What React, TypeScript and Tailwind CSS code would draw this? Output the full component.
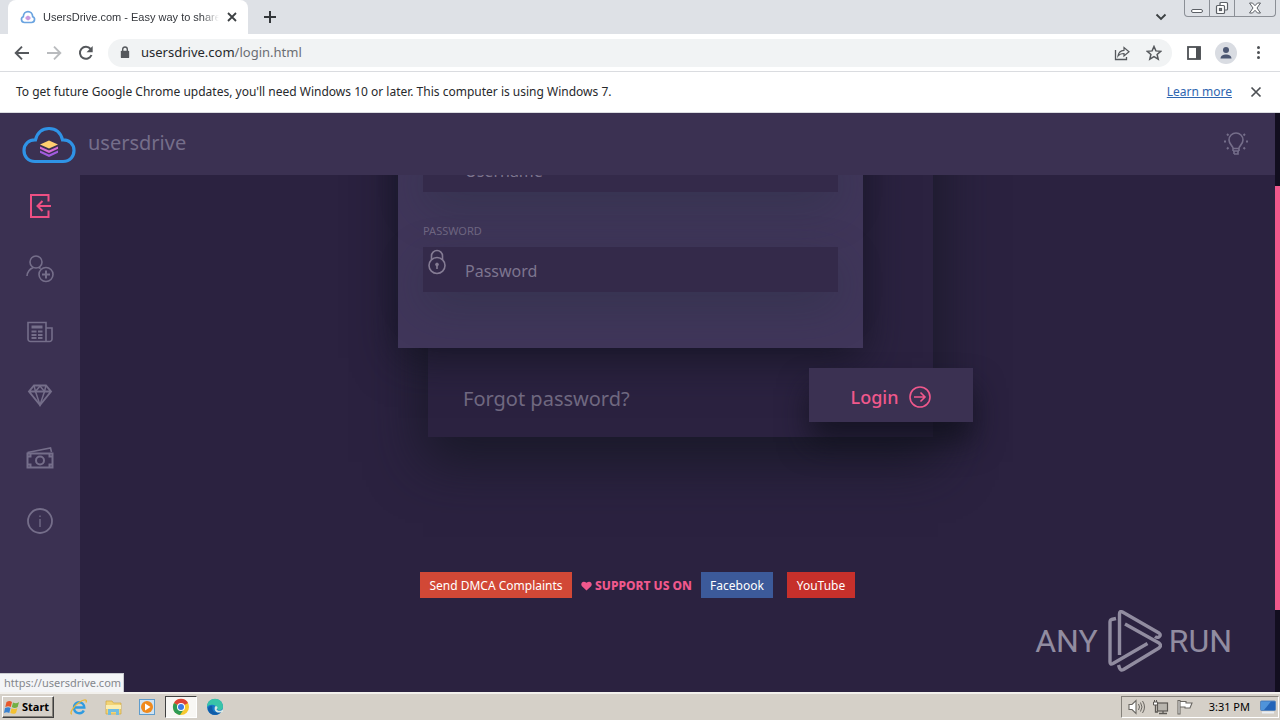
import type { ReactNode } from 'react';

type IconProps = { children: ReactNode; className?: string; box?: string };

function Icon({ children, className = '', box = '0 0 24 24' }: IconProps) {
  return (
    <svg
      viewBox={box}
      fill="none"
      stroke="currentColor"
      strokeWidth="1.600"
      aria-hidden="true"
      className={`shrink-0 ${className}`}
    >
      {children}
    </svg>
  );
}

function TabStrip() {
  return (
    <div className="flex h-[34px] items-start bg-[#dee1e6] pl-2">
      <div className="flex h-[34px] w-60 items-center rounded-t-lg bg-white pr-2 pl-3">
        <Icon box="0 0 16 16" className="size-4 text-[#6ba4e0]">
          <path d="M4.500 13.500C.8 13.500.6 8.600 3.300 7.800 3.500 1 12.500 1 12.700 7.800c2.700.8 2.500 5.700-1.200 5.700z" strokeWidth="1.700" />
          <path d="M8 6.500l2.500 1.500v2L8 11.500 5.500 10V8z" fill="#c99ae0" stroke="none" />
        </Icon>
        <span className="ml-[7px] w-[176px] mask-r-from-90% font-['Liberation_Sans',sans-serif] text-[11px] whitespace-nowrap text-[#34373c]">
          UsersDrive.com - Easy way to share
        </span>
        <button type="button" aria-label="Close tab" className="ml-[5px] flex size-4 items-center justify-center text-[#3c4043]">
          <Icon box="0 0 10 10" className="size-[10px]">
            <path d="M1 1l8 8M9 1L1 9" strokeWidth="1.800" />
          </Icon>
        </button>
      </div>
      <button type="button" aria-label="New tab" className="mt-[10px] ml-[15px] text-[#33363a]">
        <Icon box="0 0 14 14" className="size-[14px]">
          <path d="M7 1v12M1 7h12" strokeWidth="2" />
        </Icon>
      </button>
      <div className="ml-auto flex">
        <button type="button" aria-label="Search tabs" className="mt-3 mr-[17px] self-start text-[#3c4043]">
          <Icon box="0 0 12 10" className="h-[10px] w-3">
            <path d="M1.500 2.500L6 7l4.500-4.500" strokeWidth="1.900" />
          </Icon>
        </button>
        <div className="mr-1 flex h-[17px] rounded-b-[4px] border border-t-0 border-[#8b8f96] text-[#5c6066]">
          <button type="button" aria-label="Minimize" className="flex w-[25px] items-end justify-center border-r border-[#8b8f96] pb-[3px]">
            <span className="h-[4px] w-3 rounded-[2px] border border-[#5c6066] bg-white" />
          </button>
          <button type="button" aria-label="Restore" className="flex w-[25px] items-center justify-center border-r border-[#8b8f96]">
            <Icon box="0 0 14 14" className="size-[14px]">
              <rect x="5" y="1.500" width="7.500" height="7.500" rx="1" fill="#fff" strokeWidth="1.200" />
              <rect x="1.500" y="4.500" width="8" height="8" rx="1" fill="#fff" strokeWidth="1.200" />
              <rect x="4.500" y="7.500" width="2" height="2" strokeWidth="1.200" />
            </Icon>
          </button>
          <button type="button" aria-label="Close" className="flex w-10 items-center justify-center">
            <Icon box="0 0 14 12" className="h-3 w-[14px]">
              <path d="M1.500 1h3L7 3.700 9.500 1h3L9 6l3.500 5h-3L7 8.300 4.500 11h-3L5 6z" fill="#fff" strokeWidth="1" />
            </Icon>
          </button>
        </div>
      </div>
    </div>
  );
}

function Toolbar() {
  return (
    <div className="flex h-[38px] items-center border-b border-[#dadce0] bg-white pr-[14px] pl-3 text-[#55585c]">
      <button type="button" aria-label="Back" className="p-[2px]">
        <Icon box="0 0 16 16" className="size-4">
          <path d="M15 8H2M8 1.700L1.700 8 8 14.300" strokeWidth="1.900" />
        </Icon>
      </button>
      <button type="button" aria-label="Forward" className="ml-3 p-[2px] text-[#b9bbbe]">
        <Icon box="0 0 16 16" className="size-4">
          <path d="M1 8h13M8 1.700L14.300 8 8 14.300" strokeWidth="1.900" />
        </Icon>
      </button>
      <button type="button" aria-label="Reload" className="ml-3 p-[2px]">
        <Icon box="0 0 16 16" className="size-4">
          <path d="M13.500 10A6 6 0 1 1 12.600 4" strokeWidth="2" />
          <path d="M14.700 1v6.200H8.500z" fill="currentColor" stroke="none" />
        </Icon>
      </button>
      <div className="ml-3 flex h-7 flex-1 items-center rounded-full bg-[#f1f3f4] pr-[10px] pl-3">
        <svg viewBox="0 0 10 14" aria-hidden="true" className="h-[13px] w-[10px]">
          <path d="M2.500 6V3.500a2.500 2.500 0 0 1 5 0V6" fill="none" stroke="#55585c" strokeWidth="1.500" />
          <rect x="0.500" y="5" width="9" height="8" rx="1" fill="#55585c" />
        </svg>
        <div
          role="textbox"
          tabIndex={0}
          aria-label="Address"
          className="ml-[11px] flex-1 text-[13px] text-[#27292c]"
        >
          usersdrive.com<span className="text-[#6b6e73]">/login.html</span>
        </div>
        <button type="button" aria-label="Share">
          <Icon box="0 0 16 16" className="size-4">
            <path d="M1.500 5v9.500h11V12" strokeWidth="1.300" />
            <path d="M4 11c.5-4 3-5.500 6-5.700V2.500L15 6.700 10 11V8.500C7.500 8.500 5.500 9 4 11z" strokeWidth="1.200" />
          </Icon>
        </button>
        <button type="button" aria-label="Bookmark this page" className="ml-4">
          <Icon box="0 0 16 16" className="size-4">
            <path d="M8 1.500l1.900 4.400 4.800.4-3.600 3.200 1.100 4.700L8 11.700l-4.200 2.500 1.100-4.700L1.300 6.300l4.800-.4z" strokeWidth="1.500" />
          </Icon>
        </button>
      </div>
      <button type="button" aria-label="Side panel" className="ml-[15px]">
        <svg viewBox="0 0 14 14" aria-hidden="true" className="size-[14px]">
          <rect x="1" y="1" width="12" height="12" fill="none" stroke="#4d5054" strokeWidth="1.800" />
          <rect x="9" y="1" width="4.500" height="12" fill="#4d5054" />
        </svg>
      </button>
      <button type="button" aria-label="Profile" className="ml-[14px] flex size-[22px] items-center justify-center rounded-full bg-[#d9dce2]">
        <svg viewBox="0 0 14 14" aria-hidden="true" className="size-[14px] fill-[#4d5873]">
          <circle cx="7" cy="4" r="3" />
          <path d="M1.500 12.500c0-5.500 11-5.500 11 0z" />
        </svg>
      </button>
      <button type="button" aria-label="Menu" className="ml-[13px] flex w-4 flex-col items-center gap-[2px]">
        <span className="size-[3px] rounded-full bg-[#4d5054]" />
        <span className="size-[3px] rounded-full bg-[#4d5054]" />
        <span className="size-[3px] rounded-full bg-[#4d5054]" />
      </button>
    </div>
  );
}

function InfoBar() {
  return (
    <div className="flex h-[41px] items-center border-b border-[#dadce0] bg-white pr-[18px] pl-4 text-xs text-[#27292c]">
      <p>To get future Google Chrome updates, you'll need Windows 10 or later. This computer is using Windows 7.</p>
      <a href="#learn" className="ml-auto text-[#2f66b0] underline">Learn more</a>
      <button type="button" aria-label="Dismiss" className="ml-[18px] flex size-3 items-center justify-center text-[#4d5054]">
        <Icon box="0 0 12 12" className="size-3">
          <path d="M1.500 1.500l9 9M10.500 1.500l-9 9" strokeWidth="1.700" />
        </Icon>
      </button>
    </div>
  );
}

function SiteHeader() {
  return (
    <header className="relative z-10 flex h-[62px] shrink-0 items-center bg-[#3b3152] pr-[26px] pl-[22px]">
      <a href="#home" className="flex items-center gap-3 text-xl text-[#756e8a]">
        <svg viewBox="0 0 54 38" aria-hidden="true" className="mt-[2px] h-[38px] w-[54px]">
          <path
            d="M13 35.500C5.500 35.500 2 30 2 24.500 2 18 7 13.500 13.500 13.800 15.500 6 20.500 2.500 27 2.500S38.500 6 40.500 13.800C47 13.500 52 18 52 24.500c0 5.500-3.500 11-11 11z"
            fill="none"
            stroke="#2f93e6"
            strokeWidth="3.200"
          />
          <path d="M27 14.500l9 4-9 4-9-4z" fill="#ffcf70" />
          <path d="M18 20.500l9 4 9-4v2.300l-9 4.200-9-4.200z" fill="#d56bd8" />
          <path d="M18 24.500l9 4 9-4v2.200L27 31l-9-4.300z" fill="#a35be0" />
        </svg>
        <span className="mb-[2px]">usersdrive</span>
      </a>
      <button type="button" aria-label="Toggle theme" className="mb-[2px] ml-auto text-[#756e8a]">
        <Icon box="0 0 26 26" className="size-[26px]">
          <path d="M10 21v-3c0-2-4-3.500-4-8a7 7 0 0 1 14 0c0 4.500-4 6-4 8v3M10 18.500h6M10 21h6M11 24h4v-2.500M11 24v-2.500" strokeWidth="1.600" />
          <path d="M1 11.500h2M23 11.500h2M4 4l1.500 1.500M22 4l-1.500 1.500M4 19l1.500-1.500M22 19l-1.500-1.500" strokeWidth="1.900" />
        </Icon>
      </button>
    </header>
  );
}

const navItems: { label: string; art: ReactNode }[] = [
  {
    label: 'Login',
    art: <path d="M22.500 9.500V3H5v22h17.500v-6.500M25 14H12M16.500 9L11.500 14l5 5" strokeWidth="2" />,
  },
  {
    label: 'Register',
    art: (
      <>
        <circle cx="10" cy="7" r="6" />
        <path d="M1 21c.3-4.500 2.800-7 6.200-8.500M12.700 12.500l2 1" />
        <circle cx="20" cy="19.500" r="7" />
        <path d="M20 15.500v8M16 19.500h8" strokeWidth="2" />
      </>
    ),
  },
  {
    label: 'News',
    art: (
      <>
        <path d="M2 4.500h18v19H4.500A2.500 2.500 0 0 1 2 21zM20 10h6v11a2.500 2.500 0 0 1-2.500 2.500H20M20 10v13.500" />
        <path d="M5.500 9h11" strokeWidth="3" />
        <path d="M5.500 13.500h5M12 13.500h4.500M5.500 17h5M12 17h4.500M5.500 20h5M12 20h4.500" strokeWidth="2" />
      </>
    ),
  },
  {
    label: 'Premium',
    art: (
      <>
        <path d="M8 4.500h12l5 6L14 24 3 10.500zM3 10.500h22" strokeWidth="1.900" />
        <path d="M8 4.500l1.500 6L14 24l4.500-13.500 1.500-6M9.500 10.500L14 5l4.500 5.500" strokeWidth="1.500" />
      </>
    ),
  },
  {
    label: 'Earn money',
    art: (
      <>
        <path d="M1.500 9.500h25v14h-25z" strokeWidth="2" />
        <circle cx="14" cy="16.500" r="4" strokeWidth="2" />
        <path d="M1.500 8.500L24.500 4l1 4" />
        <path d="M2 12.500h2.500v-3M26 12.500h-2.500v-3M2 20.500h2.500v3M26 20.500h-2.500v3" strokeWidth="2" />
      </>
    ),
  },
  {
    label: 'About',
    art: (
      <>
        <circle cx="14" cy="14" r="12" strokeWidth="1.800" />
        <path d="M14 12v8M14 8.500v1.500" strokeWidth="1.300" />
      </>
    ),
  },
];

function Sidebar() {
  return (
    <nav className="flex w-20 shrink-0 flex-col items-center gap-[35px] bg-[#3b3152] pt-[17px] text-[#756e8a]">
      {navItems.map((item, i) => (
        <a key={item.label} href="#nav" aria-label={item.label} className={i === 0 ? 'text-[#ee4f83]' : ''}>
          <Icon box="0 0 28 28" className="size-7">{item.art}</Icon>
        </a>
      ))}
    </nav>
  );
}

function Field({ id, label, type, icon }: { id: string; label: string; type: string; icon: ReactNode }) {
  return (
    <div>
      <label htmlFor={id} className="block text-[11px] leading-4 text-[#6d6580] uppercase">{label}</label>
      <div className="mt-2 flex h-[45px] bg-[#342a4a] shadow-[0_15px_45px_rgba(30,45,55,0.3)]">
        <span className="w-[42px] pt-[2px] pl-1 text-[#857c94]">{icon}</span>
        <input
          id={id}
          type={type}
          placeholder={label}
          className="min-w-0 flex-1 bg-transparent pt-[2px] text-base text-white outline-none placeholder:text-[#7d758f]"
        />
      </div>
    </div>
  );
}

function LoginCard() {
  return (
    <form className="mx-auto -mt-[77px] w-[505px] bg-[#2b2240] shadow-[0_20px_50px_5px_rgba(22,24,36,0.85)]">
      <div className="-ml-[30px] flex w-[465px] flex-col gap-[31px] bg-[#40365a] px-[25px] pt-[25px] pb-14 shadow-[0_10px_40px_rgba(20,20,34,0.85)]">
        <Field
          id="username"
          label="Username"
          type="text"
          icon={
            <Icon box="0 0 20 26" className="h-[26px] w-5">
              <circle cx="10" cy="7" r="5" />
              <path d="M3 14a9 9 0 0 1 14 0" />
            </Icon>
          }
        />
        <Field
          id="password"
          label="Password"
          type="password"
          icon={
            <Icon box="0 0 20 26" className="h-[26px] w-5">
              <path d="M4.500 10.500V7a5.500 5.500 0 0 1 11 0v3.500" />
              <circle cx="10" cy="16.500" r="8" />
              <circle cx="10" cy="15.500" r="1.400" fill="currentColor" strokeWidth="1" />
              <path d="M10 16v4" strokeWidth="1.600" />
            </Icon>
          }
        />
      </div>
      <div className="-mr-10 flex items-center justify-between pt-5 pb-[15px] pl-[35px]">
        <a href="#forgot" className="pt-2 text-xl text-[#6f6880]">Forgot password?</a>
        <button
          type="submit"
          className="flex h-[54px] w-[164px] items-center justify-center gap-[11px] bg-[#3b3152] pt-[3px] text-lg font-medium text-[#f0588c] shadow-[0_20px_30px_rgba(18,17,30,0.8)]"
        >
          Login
          <Icon box="0 0 22 22" className="size-[22px]">
            <circle cx="11" cy="11" r="10" />
            <path d="M5 11h11M11.500 6.500L16 11l-4.500 4.500" />
          </Icon>
        </button>
      </div>
    </form>
  );
}

function SupportLinks() {
  return (
    <footer className="mx-auto mt-[135px] flex w-fit items-center pr-[86px] text-xs text-white">
      <a href="#dmca" className="flex h-[26px] w-[152px] items-center justify-center bg-[#d24836] pt-[2px]">Send DMCA Complaints</a>
      <span className="flex w-[129px] items-center justify-center gap-[3px] pt-[2px] font-extrabold text-[#f0588c]">
        <svg viewBox="0 0 12 11" aria-hidden="true" className="h-[10px] w-[11px] fill-current">
          <path d="M6 10.500L1 5.700C-1.300 3 2-1.500 6 2c4-3.500 7.300 1 5 3.700z" />
        </svg>
        SUPPORT US ON
      </span>
      <a href="#facebook" className="flex h-[26px] w-[72px] items-center justify-center bg-[#3c5a9a] pt-[2px]">Facebook</a>
      <a href="#youtube" className="ml-[14px] flex h-[26px] w-[68px] items-center justify-center bg-[#c6302b] pt-[2px]">YouTube</a>
    </footer>
  );
}

function Watermark() {
  return (
    <div className="absolute right-12 bottom-5 flex items-center font-['Roboto',sans-serif] text-[32px] leading-none text-[#918ca0]">
      <span>ANY</span>
      <svg viewBox="0 0 54 62" aria-hidden="true" className="mr-[7px] ml-[10px] h-[62px] w-[54px]" fill="none" stroke="currentColor" strokeWidth="3.400" strokeLinejoin="round">
        <path d="M8 8.500L3.500 9.500Q2 10 2 12v40q0 3 3 1.500L39.500 33.500" />
        <path d="M11.500 45V4q0-3.500 3-2L51 23q2.500 2 0 4-2 1-4-.5" />
        <path d="M10.500 55l1 3q1 3 4 1.500L51 38q3-2.500 0-5L17 14" />
      </svg>
      <span>RUN</span>
    </div>
  );
}

const taskApps: { label: string; active?: boolean; art: ReactNode }[] = [
  {
    label: 'Internet Explorer',
    art: (
      <>
        <path d="M4.500 9.500h9.800C14 2.500 4 2.500 4 9.500s8 7 9.800 3" fill="none" stroke="#2f9be0" strokeWidth="2.400" />
        <path d="M2 16C-1 16 3 8.500 9 4.500c5-3.500 8.500-3.500 7 0" fill="none" stroke="#e9b83a" strokeWidth="1.400" />
      </>
    ),
  },
  {
    label: 'Explorer',
    art: (
      <>
        <path d="M2 3h6l1.500 2H17v11H2z" fill="#f2d477" stroke="#d0a73f" strokeWidth="0.700" />
        <path d="M2 7h15v4H2z" fill="#fbeeb0" />
        <path d="M4 17v-6h11v6h-3v-3H7v3z" fill="#72bde0" />
      </>
    ),
  },
  {
    label: 'Media Player',
    art: (
      <>
        <rect x="1.500" y="1.500" width="15" height="15" fill="#cfe3f3" stroke="#5f9ccc" />
        <circle cx="9" cy="9" r="6" fill="#f08a1d" />
        <path d="M7 5.500L12.500 9 7 12.500z" fill="#fff" />
      </>
    ),
  },
  {
    label: 'Chrome',
    active: true,
    art: (
      <>
        <circle cx="9" cy="9" r="8" fill="#f7c92f" />
        <path d="M9 9L2 5a8 8 0 0 1 14 0z" fill="#dd4437" />
        <path d="M9 9L2 5a8 8 0 0 0 6 12l4-6z" fill="#2f9b54" />
        <circle cx="9" cy="9" r="4" fill="#fff" />
        <circle cx="9" cy="9" r="3" fill="#3c7be4" />
      </>
    ),
  },
  {
    label: 'Edge',
    art: (
      <>
        <circle cx="9" cy="9" r="8" fill="#1878c8" />
        <path d="M1 9c0-11 16-11 16 0 0 4-6 4-6 1.500C11 7 4 5 1 9z" fill="#39c4a8" />
        <path d="M6.500 9c-1 4 3 7 8.500 5-4 5-13 3-13-3.500C3.500 7 6 7 6.500 9z" fill="#105ca8" />
        <path d="M9 8.500c3-1 3 2 1.500 3 1.500 2 4.500 1.500 6.500 0V14l-3 .5c-5 .5-6-3-5-6z" fill="#d9e9e4" />
      </>
    ),
  },
];

function Taskbar() {
  return (
    <div className="flex h-7 shrink-0 items-center border-t-2 border-[#f2f0ec] bg-[#d5d0c8] pr-px pl-[2px] text-[11px] text-black">
      <button
        type="button"
        className="flex h-[22px] w-[52px] items-center gap-[2px] border border-t-white border-r-[#404040] border-b-[#404040] border-l-white pl-px font-bold shadow-[inset_-1px_-1px_0_#85817a]"
      >
        <svg viewBox="0 0 16 16" aria-hidden="true" className="h-4 w-4 shrink-0">
          <path d="M2.500 3C5 1.500 6.500 2 8 3L6.800 8C5 7 3.500 7 1.300 8z" fill="#e8582b" />
          <path d="M9 3.500c2 1 4 1 6-.5L13.700 8c-2 1.200-4 1.200-5.900 0z" fill="#73b043" />
          <path d="M1 9c2.500-1 4-1 5.500 0l-1.200 5C3.500 13 2 13 0 14z" fill="#3a82d0" />
          <path d="M7.500 9.300c2 1 3.700 1 5.900 0L12 14c-2 1.200-3.700 1-5.700 0z" fill="#f3c132" />
        </svg>
        Start
      </button>
      <div className="ml-2 flex">
        {taskApps.map((app) => (
          <button
            key={app.label}
            type="button"
            aria-label={app.label}
            className={
              app.active
                ? 'mx-px flex h-[22px] w-8 items-center justify-center border border-t-[#404040] border-r-white border-b-white border-l-[#404040] bg-[#f8f7f4]'
                : 'flex h-[22px] w-[34px] items-center justify-center'
            }
          >
            <svg viewBox="0 0 18 18" aria-hidden="true" className="size-[18px]">{app.art}</svg>
          </button>
        ))}
      </div>
      <div className="ml-auto flex h-[22px] items-center border border-t-[#85817a] border-r-white border-b-white border-l-[#85817a] pr-[2px] pl-[6px]">
        <Icon box="0 0 18 16" className="h-4 w-[18px] text-[#6a6762]">
          <path d="M1 5.500h3L8 1.500v13l-4-4H1z" fill="#fff" strokeWidth="1.100" />
          <path d="M10.500 5q2 3 0 6M12.500 3.500q3 4.500 0 9M14.500 2q4 6 0 12" strokeWidth="1" />
        </Icon>
        <Icon box="0 0 18 16" className="ml-[6px] h-4 w-[18px] text-[#5c5954]">
          <rect x="5.500" y="4" width="10" height="8" fill="#b8b5ae" strokeWidth="1.200" />
          <path d="M7 14.500h8M11 12v2.500M3.500 6v7H6" strokeWidth="1.300" />
          <path d="M1.500 3h4v3h-4zM2.500 1v2M4.500 1v2" fill="#fff" strokeWidth="1" />
        </Icon>
        <Icon box="0 0 18 16" className="ml-[6px] h-4 w-[18px] text-[#6a6762]">
          <path d="M2 15V1.500h2V15zM4 2.500h6V4h6l-2 5H9V8H4z" fill="#fff" strokeWidth="1.100" />
        </Icon>
        <span className="ml-[15px]">3:31 PM</span>
        <svg viewBox="0 0 16 14" aria-hidden="true" className="ml-[10px] h-[14px] w-4">
          <rect x="0.500" y="1" width="15" height="9.500" rx="1" fill="#2464b8" stroke="#5a86bb" />
          <path d="M1 1.500h10L4 10H1z" fill="#4f93da" />
          <path d="M2 12.500h12" stroke="#e9eef4" strokeWidth="2" />
        </svg>
      </div>
    </div>
  );
}

export default function App() {
  return (
    <div className="flex h-screen flex-col overflow-hidden font-['Noto_Sans','Open_Sans',sans-serif]">
      <TabStrip />
      <Toolbar />
      <InfoBar />
      <div className="relative flex min-h-0 flex-1">
        <div className="flex min-w-0 flex-1 flex-col overflow-hidden bg-[#2b2240]">
          <SiteHeader />
          <div className="flex min-h-0 flex-1">
            <Sidebar />
            <main className="min-w-0 flex-1 overflow-hidden pl-[6px]">
              <LoginCard />
              <SupportLinks />
            </main>
          </div>
        </div>
        <div className="flex w-[5px] flex-col bg-[#120e1f] pt-[73px]">
          <div className="h-[424px] bg-[#f0588c]" />
        </div>
        <div className="absolute bottom-0 left-0 border-t border-r border-[#c9cbd0] bg-[#f4f5f7] pr-[2px] pl-1 text-[11px] leading-[18px] text-[#85888d]">
          https://usersdrive.com
        </div>
        <Watermark />
      </div>
      <Taskbar />
    </div>
  );
}
